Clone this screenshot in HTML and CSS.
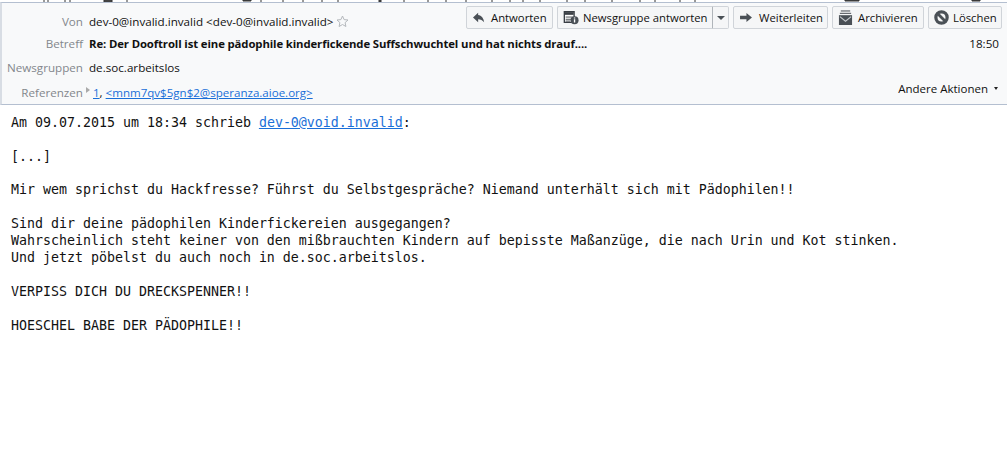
FILE: index.html
```html
<!DOCTYPE html>
<html lang="de">
<head>
<meta charset="utf-8">
<title>Re: Der Dooftroll</title>
<link rel="stylesheet" href="styles.css">
</head>
<body>
<svg class="strip" width="1007" height="2" viewBox="0 0 1007 2"><path d="M44 0v2M48 0v2M65 0v2M70 0v2M104 0h8v2h-8zM127 0v2M243 0h8v1h-8zM261 0v2M283 0v2M303 0v2M322 0v2M338 0v2M379 0h2v2h-2zM404 0v2M428 0v2M446 0v2M466 0v2M492 0v2M510 0v2M523 0v2M540 0v2M567 0v2M585 0v2M612 0v2M640 0v2M655 0v2M680 0v2M695 0v2M845 0h14v1h-14zM972 0h8v1h-8z" stroke="#333" stroke-width="1" fill="#555"/></svg>
<header class="head">
  <div class="row row-from">
    <span class="label">Von</span>
    <span class="value">dev-0@invalid.invalid &lt;dev-0@invalid.invalid&gt;</span>
    <svg class="star" width="13" height="13" viewBox="0 0 13 13"><path d="M6.500 1l1.600 3.600 3.900.4-2.900 2.600.8 3.900-3.400-2-3.400 2 .8-3.900L1 5l3.900-.4z" fill="none" stroke="#b4b8bc"/></svg>
    <div class="actions">
      <button class="btn btn-a"><svg width="14" height="12" viewBox="0 0 16 14"><path d="M7 1L1 6.500 7 12V8.500c3 0 5 1 7 3.500-.5-4.500-3-8-7-8.500z" fill="#4a5056"/></svg>Antworten</button>
      <div class="split">
        <button class="btn btn-n"><svg width="16" height="15" viewBox="0 0 18 16"><path d="M1.500 1.500h11v12h-11z" fill="#fff" stroke="#3a3f45" stroke-width="1.500"/><path d="M2 2h10v3H2z" fill="#3a3f45"/><path d="M3 7.500h8M3 10h6M3 12h5" stroke="#3a3f45"/><circle cx="13" cy="11" r="4.500" fill="#4a5056"/><path d="M13 10v3.500M13 8v1.200" stroke="#fff" stroke-width="1.500"/></svg>Newsgruppe antworten</button>
        <button class="btn-drop" aria-label="Mehr"><i class="caret"></i></button>
      </div>
      <button class="btn btn-w"><svg width="14" height="11" viewBox="0 0 15 12"><path d="M1 4h7V1l6 5-6 5V8H1z" fill="#4a5056"/></svg>Weiterleiten</button>
      <button class="btn btn-r"><svg width="15" height="16" viewBox="0 0 16 17"><path d="M3 1h10M2 3.500h12" stroke="#3a3f45"/><path d="M1 5.500h14V16H1z" fill="#4a5056"/><path d="M2 7l6 5 6-5" fill="none" stroke="#c4c8cc" stroke-width="1.200"/></svg>Archivieren</button>
      <button class="btn btn-l"><svg width="15" height="15" viewBox="0 0 16 16"><circle cx="8" cy="8" r="6" fill="none" stroke="#4a5056" stroke-width="3.500"/><path d="M4 4l8 8" stroke="#4a5056" stroke-width="3"/></svg>Löschen</button>
    </div>
  </div>
  <div class="row row-subj">
    <span class="label">Betreff</span>
    <span class="value subject">Re: Der Dooftroll ist eine pädophile kinderfickende Suffschwuchtel und hat nichts drauf....</span>
    <span class="time">18:50</span>
  </div>
  <div class="row row-news">
    <span class="label">Newsgruppen</span>
    <span class="value">de.soc.arbeitslos</span>
  </div>
  <div class="row row-refs">
    <span class="label">Referenzen</span>
    <i class="twisty"></i>
    <span class="value refs"><a href="#">1</a>, <a href="#">&lt;mnm7qv$5gn$2@speranza.aioe.org&gt;</a></span>
    <span class="more">Andere Aktionen<i class="caret small"></i></span>
  </div>
</header>
<main class="body">
<pre class="msg">Am 09.07.2015 um 18:34 schrieb <a href="#">dev-0@void.invalid</a>:

[...]

Mir wem sprichst du Hackfresse? Führst du Selbstgespräche? Niemand unterhält sich mit Pädophilen!!

Sind dir deine pädophilen Kinderfickereien ausgegangen?
Wahrscheinlich steht keiner von den mißbrauchten Kindern auf bepisste Maßanzüge, die nach Urin und Kot stinken.
Und jetzt pöbelst du auch noch in de.soc.arbeitslos.

VERPISS DICH DU DRECKSPENNER!!

HOESCHEL BABE DER PÄDOPHILE!!</pre>
</main>
</body>
</html>
```

FILE: styles.css
```css
* { box-sizing: border-box; }
html, body { margin: 0; height: 100%; overflow: hidden; }
body { background: #fff; color: #111; font-family: "Open Sans", "Noto Sans", sans-serif; font-size: 11.650px; }
a { color: #1a6fd8; text-decoration: underline; }
.strip { display: block; }
.head { background: #f8f9fa; border-top: 1px solid #b4bfd0; border-bottom: 1px solid #b4bfd0; border-left: 2px solid #d8dde4; height: 103px; }
.row { display: flex; align-items: center; }
.label { width: 81px; text-align: right; color: #83878c; flex: none; margin-right: 6px; }
.value { white-space: nowrap; }
.row-from { height: 30px; padding-top: 6px; }
.row-subj { height: 20px; }
.row-news { height: 28px; }
.row-refs { height: 23px; }
.star { margin-left: 2px; }
.subject { font-weight: 700; font-size: 11.350px; letter-spacing: -.01em; }
.refs { font-size: 11.550px; }
.time, .more { margin-left: auto; padding-right: 8px; }
.more { padding-right: 9px; font-size: 11.500px; margin-top: -8px; display: flex; align-items: center; }
.twisty { width: 0; height: 0; margin: -6px 3px 0 -3px; border-left: 4px solid #aaa; border-top: 3px solid transparent; border-bottom: 3px solid transparent; }
.actions { margin-left: auto; align-self: flex-start; margin-top: -3px; display: flex; gap: 4px; padding-right: 5px; }
.btn, .btn-drop { height: 23px; background: #f5f6f7; border: 1px solid #d0d4d9; border-radius: 2px; color: #111; font: inherit; font-size: 11.300px; display: flex; align-items: center; padding: 0 0 0 5px; white-space: nowrap; }
.btn svg { flex: none; }
.btn-a { width: 87px; }
.btn-a svg { margin-right: 5px; }
.split { display: flex; }
.btn-n { width: 155px; border-right: 0; border-radius: 2px 0 0 2px; }
.btn-n svg { margin-right: 4px; }
.btn-drop { width: 17px; padding: 0; justify-content: center; border-radius: 0 2px 2px 0; border-left: 1px solid #b0b5ba; }
.btn-w { width: 95px; }
.btn-w svg { margin-right: 6px; }
.btn-r { width: 92px; }
.btn-r svg { margin-right: 5px; }
.btn-l { width: 74px; }
.btn-l svg { margin-right: 4px; }
.caret { width: 0; height: 0; border-left: 4px solid transparent; border-right: 4px solid transparent; border-top: 4px solid #4a5056; }
.caret.small { margin-left: 6px; border-left-width: 2px; border-right-width: 2px; border-top-width: 3px; border-top-color: #222; }
.body { padding: 9.900px 11px; }
.msg { margin: 0; font-family: "DejaVu Sans Mono", monospace; font-size: 13.290px; line-height: 16.890px; color: #111; }
```
